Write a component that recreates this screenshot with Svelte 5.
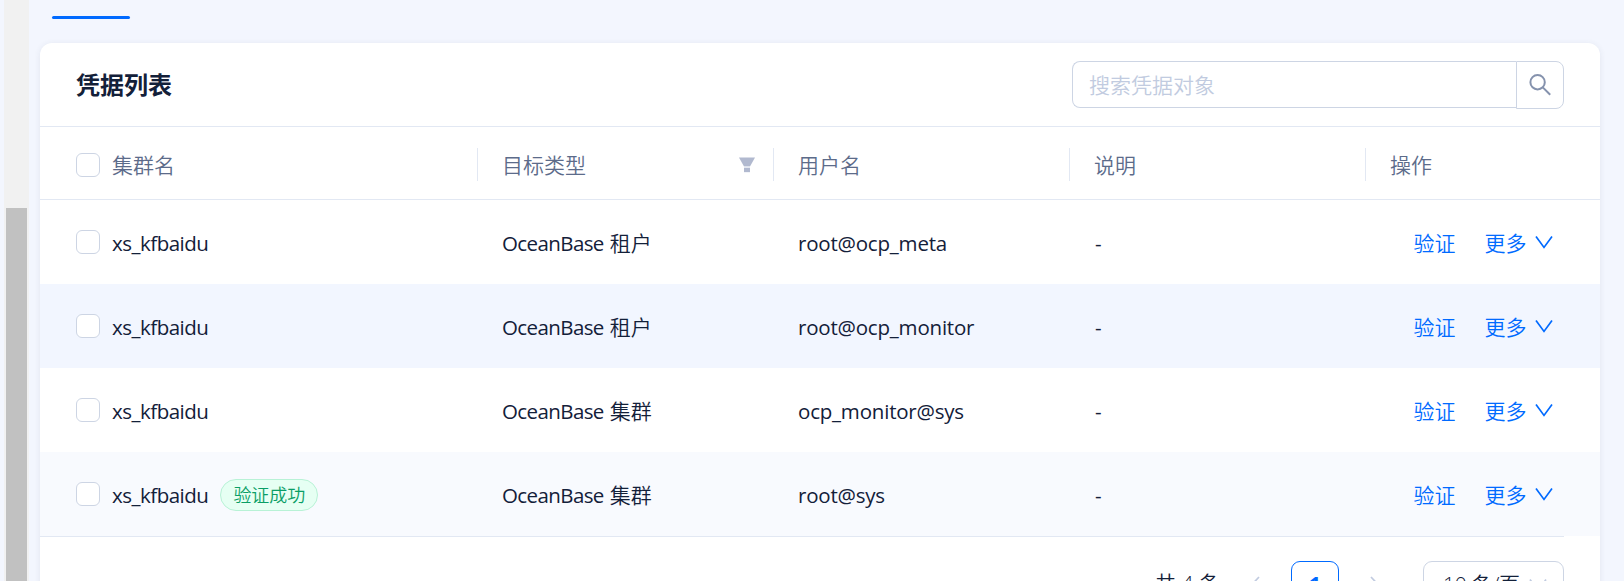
<script lang="ts">
interface Credential {
  cluster: string;
  target: string;
  kind: string;
  user: string;
  verified?: boolean;
}

const credentials: Credential[] = [
  { cluster: 'xs_kfbaidu', target: 'OceanBase', kind: '租户', user: 'root@ocp_meta' },
  { cluster: 'xs_kfbaidu', target: 'OceanBase', kind: '租户', user: 'root@ocp_monitor' },
  { cluster: 'xs_kfbaidu', target: 'OceanBase', kind: '集群', user: 'ocp_monitor@sys' },
  { cluster: 'xs_kfbaidu', target: 'OceanBase', kind: '集群', user: 'root@sys', verified: true },
];

let keyword = $state('');
</script>

<div class="page">
  <div class="scrollbar"><div class="thumb"></div></div>

  <main>
    <div class="tab-ink"></div>

    <section class="card">
      <header>
        <h2>凭据列表</h2>
        <div class="search">
          <input type="text" placeholder="搜索凭据对象" bind:value={keyword} />
          <button aria-label="搜索">
            <svg width="24" height="24" viewBox="0 0 24 24" fill="none" stroke="#8592ad" stroke-width="2">
              <circle cx="8.6" cy="9.2" r="7.2" />
              <path d="M13.8 14.4 L21.2 21.8" />
            </svg>
          </button>
        </div>
      </header>

      <div class="row head">
        <div class="cell"><span class="checkbox"></span>集群名</div>
        <div class="cell">
          目标类型
          <svg class="filter" width="16" height="16" viewBox="0 0 16 16">
            <path d="M0 0.5 H16 L11 9.5 H5 Z" fill="#b1b9cf" />
            <path d="M5 9.5 H11 V15.5 H5 Z" fill="#e4e8f1" />
            <path d="M5 11 H11 V15 H5 Z" fill="#b1b9cf" />
          </svg>
        </div>
        <div class="cell">用户名</div>
        <div class="cell">说明</div>
        <div class="cell">操作</div>
      </div>

      {#each credentials as item, i}
        <div class="row" class:hover={i === 1} class:last={i === 3}>
          <div class="cell">
            <span class="checkbox"></span>
            <span class="latin cluster">{item.cluster}</span>
            {#if item.verified}
              <span class="tag">验证成功</span>
            {/if}
          </div>
          <div class="cell text"><span class="latin target">{item.target}</span>{item.kind}</div>
          <div class="cell"><span class="latin">{item.user}</span></div>
          <div class="cell"><span class="latin dash">-</span></div>
          <div class="cell actions">
            <a href="#verify"><span>验证</span></a>
            <a href="#more">
              <span>更多</span>
              <svg width="18" height="13" viewBox="0 0 18 13" fill="none" stroke="#006aff" stroke-width="1.7">
                <path d="M1 0.6 L9 11.4 L17 0.6" />
              </svg>
            </a>
          </div>
        </div>
      {/each}

      <footer>
        <span class="total">共 4 条</span>
        <svg class="prev" width="10" height="18" viewBox="0 0 10 18" fill="none" stroke="#c1cbe0" stroke-width="1.7">
          <path d="M9 1 L1.5 9 L9 17" />
        </svg>
        <span class="current">1</span>
        <svg class="next" width="10" height="18" viewBox="0 0 10 18" fill="none" stroke="#c1cbe0" stroke-width="1.7">
          <path d="M1 1 L8.5 9 L1 17" />
        </svg>
        <div class="size">
          <span>10 条/页</span>
          <svg width="18" height="13" viewBox="0 0 18 13" fill="none" stroke="#c1cbe0" stroke-width="1.7">
            <path d="M1 0.6 L9 11.4 L17 0.6" />
          </svg>
        </div>
      </footer>
    </section>
  </main>
</div>

<style>
  :global(body) {
    margin: 0;
    overflow: hidden;
  }

  .page {
    display: flex;
    height: 581px;
    padding-left: 4px;
    box-sizing: border-box;
    overflow: hidden;
    background: #f3f6fe;
    color: #132039;
    font: 350 21px/32px 'Open Sans', 'Noto Sans CJK SC', sans-serif;
  }

  .scrollbar {
    width: 25px;
    padding: 208px 2px 0;
    box-sizing: border-box;
    background: #f1f1f1;
  }

  .thumb {
    height: 100%;
    background: #c1c1c1;
  }

  main {
    width: 1560px;
    margin-left: 11px;
    padding-top: 16px;
  }

  .tab-ink {
    width: 78px;
    height: 3px;
    margin: 0 0 24px 12px;
    border-radius: 2px;
    background: #006aff;
  }

  .card {
    border-radius: 12px;
    background: #fff;
    box-shadow: 0 1px 6px rgba(54, 69, 99, 0.09);
  }

  header {
    display: flex;
    align-items: flex-start;
    justify-content: space-between;
    height: 84px;
    padding: 18px 36px 0;
    box-sizing: border-box;
    border-bottom: 1px solid #e2e8f3;
  }

  h2 {
    margin: 8px 0 0;
    font-size: 24px;
    font-weight: 700;
    line-height: 32px;
  }

  .search {
    display: flex;
    align-items: flex-start;
  }

  input {
    width: 444px;
    height: 47px;
    padding: 0 16px;
    box-sizing: border-box;
    border: 1px solid #cdd5e4;
    border-right: 0;
    border-radius: 8px 0 0 8px;
    outline: 0;
    color: inherit;
    font: inherit;
  }

  input::placeholder {
    color: #c1cbe0;
  }

  button {
    display: flex;
    width: 48px;
    height: 48px;
    padding: 11px 0 0 12px;
    box-sizing: border-box;
    border: 1px solid #cdd5e4;
    border-radius: 0 8px 8px 0;
    background: #fff;
  }

  .row {
    display: grid;
    grid-template-columns: 438px 296px 296px 296px 234px;
    height: 84px;
    align-items: center;
  }

  .row.hover {
    background: #f2f6ff;
  }

  .row.last {
    background: #f8fafe;
  }

  .row.head {
    height: 73px;
    padding-top: 3px;
    box-sizing: border-box;
    border-bottom: 1px solid #e2e8f3;
    color: #5c6b8a;
  }

  .cell {
    display: flex;
    align-items: center;
    padding-left: 24px;
    white-space: nowrap;
  }

  .cell:first-child {
    padding-left: 36px;
  }

  .head .cell {
    height: 33px;
    box-sizing: border-box;
    border-right: 1px solid #e2e8f3;
  }

  .head .cell:last-child {
    border-right: 0;
  }

  .checkbox {
    width: 24px;
    height: 24px;
    margin-right: 12px;
    box-sizing: border-box;
    border: 1px solid #cdd5e4;
    border-radius: 6px;
    background: #fff;
  }

  .filter {
    margin: 0 18px 0 auto;
  }

  .latin {
    padding-top: 1px;
    font-weight: 400;
    font-size: 20.5px;
    letter-spacing: -0.2px;
  }

  .cluster {
    letter-spacing: -0.5px;
  }

  .text {
    padding-top: 1px;
  }

  .target {
    margin-right: 6px;
    padding-top: 0;
    letter-spacing: -0.6px;
  }

  .dash {
    padding-left: 1px;
  }

  .tag {
    height: 32px;
    margin: 2px 0 0 12px;
    padding: 0 12px;
    box-sizing: border-box;
    border: 1px solid #b8f2d6;
    border-radius: 16px;
    background: #e6fff3;
    color: #0a9e66;
    font-size: 18px;
    line-height: 30px;
  }

  .actions {
    gap: 29px;
    padding-left: 47.5px;
  }

  a {
    display: flex;
    align-items: center;
    gap: 8px;
    color: #006aff;
    text-decoration: none;
  }

  a span {
    padding-top: 2px;
  }

  footer {
    display: flex;
    height: 90px;
    margin-right: 36px;
    padding-top: 24px;
    box-sizing: border-box;
    justify-content: flex-end;
    align-items: flex-start;
    border-top: 1px solid #e2e8f3;
    line-height: 48px;
  }

  .total {
    line-height: 44px;
  }

  .prev {
    margin: 15px 31px 0 30px;
  }

  .next {
    margin: 15px 43px 0 31px;
  }

  .current {
    width: 48px;
    height: 48px;
    box-sizing: border-box;
    border: 1px solid #006aff;
    border-radius: 9px;
    color: #006aff;
    font-weight: 700;
    line-height: 45px;
    text-align: center;
  }

  .size {
    display: flex;
    align-items: center;
    justify-content: space-between;
    width: 141px;
    height: 48px;
    padding: 0 16px 0 19px;
    box-sizing: border-box;
    border: 1px solid #cdd5e4;
    border-radius: 9px;
  }

  .size span {
    padding-bottom: 2px;
    letter-spacing: -0.3px;
  }
</style>
